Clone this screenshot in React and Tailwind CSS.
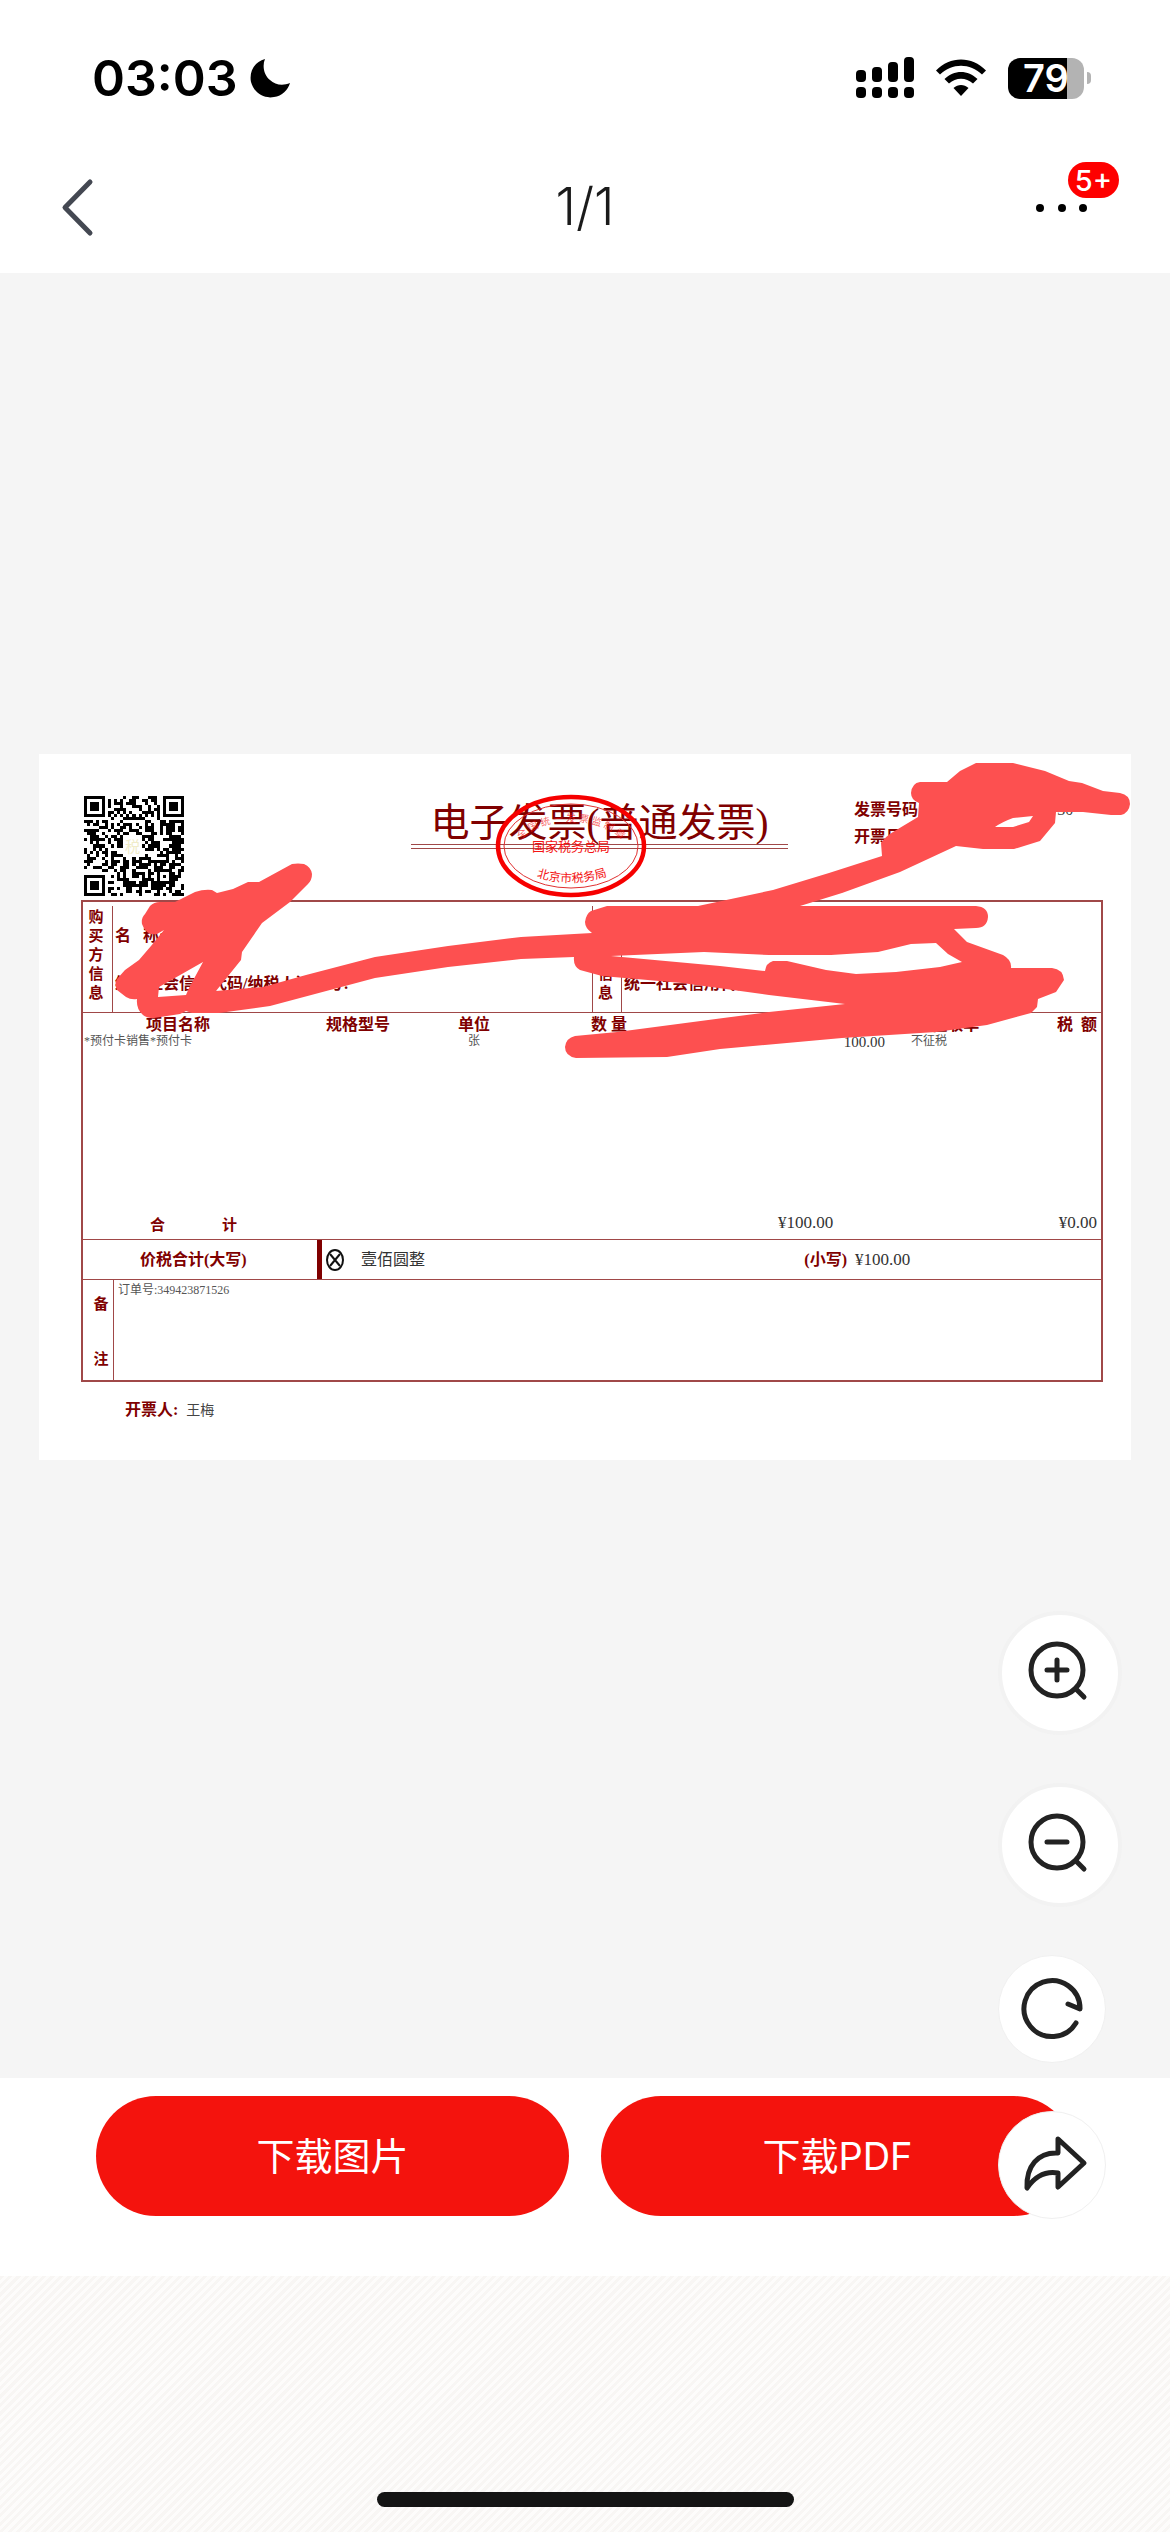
import { useMemo } from "react";

const QR_SIZE = 33

// 7x7 corner markers of the code
const finderModule = (x, y) => {
  const corners = [[0, 0], [QR_SIZE - 7, 0], [0, QR_SIZE - 7]]
  for (const [cx, cy] of corners) {
    const dx = x - cx
    const dy = y - cy
    if (dx >= -1 && dx <= 7 && dy >= -1 && dy <= 7) {
      const ring = Math.max(Math.abs(dx - 3), Math.abs(dy - 3))
      return ring === 3 || ring <= 1
    }
  }
  return null
}

const qrModules = () => {
  const cells = []
  let seed = 20417
  for (let y = 0; y < QR_SIZE; y++) {
    for (let x = 0; x < QR_SIZE; x++) {
      seed = (seed * 1103515245 + 12345) % 2147483648
      let on = (seed >> 16) % 100 < 52
      const finder = finderModule(x, y)
      const align = Math.max(Math.abs(x - 26), Math.abs(y - 26))
      if (finder !== null) on = finder
      else if (align <= 2) on = align !== 1
      else if (x === 6 || y === 6) on = (x + y) % 2 === 0
      else if (x > 12 && x < 19 && y > 12 && y < 20) on = false
      if (on) cells.push([x, y])
    }
  }
  return cells
}

const App = () => {
  return (
    <div className="flex min-h-screen flex-col bg-white font-['Inter','Noto_Sans_CJK_SC',sans-serif] text-black">
      <StatusBar />
      <TopBar />
      <div className="relative flex flex-col">
        <main className="bg-[#f5f5f5] px-[39px] pt-[481px] pb-[618px]">
          <Invoice />
        </main>
        <footer className="flex gap-8 bg-white px-24 pt-[18px] pb-[60px]">
          <DownloadButton label="下载图片" />
          <DownloadButton label="下载PDF" />
        </footer>
        <FloatingActions />
      </div>
      <div className="flex grow items-end justify-center bg-[repeating-linear-gradient(135deg,#f8f6f4_0px,#f8f6f4_3px,#fdfcfb_3px,#fdfcfb_6px)] pb-[25px]">
        <div className="h-[15px] w-[417px] rounded-full bg-[#141414]"></div>
      </div>
    </div>
  )
}

const StatusBar = () => {
  return (
    <div className="flex h-[156px] items-center justify-between pr-[79px] pl-[92px]">
      <div className="flex items-center gap-3">
        <span className="text-[50px] leading-none font-semibold">03:03</span>
        <svg className="h-10 w-10" viewBox="0 0 40 40">
          <path d="M15 1C4 4-1 14 1 24c3 11 13 17 23 15 8-1 14-7 16-14-7 3-15 2-20-3C14 17 12 8 15 1z" />
        </svg>
      </div>
      <div className="flex items-center">
        <svg className="mr-[21px] h-[42px] w-[60px]" viewBox="0 0 60 42">
          <rect x="1" y="13" width="10" height="12" rx="4" />
          <rect x="17" y="10" width="10" height="15" rx="4" />
          <rect x="33" y="5" width="10" height="20" rx="4" />
          <rect x="49" y="0" width="10" height="25" rx="4" />
          <rect x="1" y="30" width="10" height="11" rx="4" />
          <rect x="17" y="30" width="10" height="11" rx="4" />
          <rect x="33" y="30" width="10" height="11" rx="4" />
          <rect x="49" y="30" width="10" height="11" rx="4" />
        </svg>
        <svg className="mr-[22px] h-[38px] w-[50px]" viewBox="0 0 50 38">
          <path d="M0 11.500C14-3.300 36-3.300 50 11.500L46 15.500C34 3.800 16 3.800 4 15.500z" />
          <path d="M8.500 20C18 10.500 32 10.500 41.500 20L37 24.500C30 18 20 18 13 24.500z" />
          <path d="M17.500 29C22 25 28 25 32.500 29L25 37z" />
        </svg>
        <div className="flex h-[41px] w-[76px] items-center justify-center rounded-xl bg-[linear-gradient(90deg,#000_78%,#b3b3b3_78%)]">
          <span className="text-[38px] leading-none font-semibold text-white">79</span>
        </div>
        <div className="ml-[3px] h-3 w-1 rounded-r-full bg-[#b3b3b3]"></div>
      </div>
    </div>
  )
}

const TopBar = () => {
  return (
    <header className="grid h-[117px] grid-cols-3 items-start px-[51px] pt-2">
      <button aria-label="返回" className="justify-self-start">
        <svg className="h-[86px] w-[54px]" viewBox="0 0 54 86" fill="none" stroke="#444852" strokeWidth="5" strokeLinecap="round" strokeLinejoin="round">
          <path d="M39 18L14 43.500L39 69" />
        </svg>
      </button>
      <h1 className="justify-self-center text-[52px] leading-[86px] font-light text-[#1a1a1a]">1/1</h1>
      <button aria-label="更多" className="relative h-[86px] w-[90px] justify-self-end">
        <svg className="h-full w-full" viewBox="0 0 90 86">
          <circle cx="11" cy="44" r="4" />
          <circle cx="33" cy="44" r="4" />
          <circle cx="54" cy="44" r="4" />
        </svg>
        <span className="absolute top-[-2px] right-0 flex h-9 w-[51px] items-center justify-center rounded-full bg-[#fe0000] text-[29px] leading-none font-medium text-white">5+</span>
      </button>
    </header>
  )
}

const Invoice = () => {
  return (
    <section className="relative flex h-[706px] flex-col bg-white pt-[42px] pr-[28px] pl-[42px] font-['Liberation_Serif','Noto_Sans_CJK_SC',serif] text-[#800000]">
      <div className="flex h-[104px] items-start justify-between pl-[3px]">
        <QrCode />
        <div className="ml-[161px] w-[377px] pt-[5px]">
          <h2 className="border-b border-[#a04848] text-center text-[39px] leading-[43px] whitespace-nowrap">电子发票(普通发票)</h2>
          <div className="mt-[3px] border-b border-[#a04848]"></div>
        </div>
        <div className="w-[249px] text-base leading-[27px] font-bold">
          <p className="flex">发票号码:<span className="ml-[134px] font-normal text-[#444]">30</span></p>
          <p>开票日期:</p>
        </div>
      </div>

      <div className="border-2 border-[#a04848]">
        <div className="flex h-[111px] border-b border-[#a04848]">
          <Party label="购买方信息" />
          <Party label="销售方信息" divided />
        </div>
        <Items />
        <div className="flex h-[41px] items-center border-y border-[#a04848] text-base">
          <span className="w-[234px] pl-[57px] font-bold">价税合计(大写)</span>
          <span className="h-full w-[5px] bg-[#800000]"></span>
          <svg className="ml-[3px] h-6 w-5" viewBox="0 0 20 24" fill="none" stroke="#111" strokeWidth="2">
            <ellipse cx="10" cy="12" rx="8" ry="10" />
            <path d="M5 6l10 12M15 6L5 18" />
          </svg>
          <span className="ml-[16px] grow text-[#333]">壹佰圆整</span>
          <span className="font-bold">(小写)</span>
          <span className="ml-2 w-[246px] text-[17px] text-[#333]">¥100.00</span>
        </div>
        <div className="flex h-[100px]">
          <div className="flex w-[31px] flex-col items-center justify-between border-r border-[#a04848] pt-[13px] pb-[10px] pl-[6px] text-[15px] font-bold">
            <span>备</span>
            <span>注</span>
          </div>
          <p className="pt-[2px] pl-1 text-xs text-[#555]">订单号:349423871526</p>
        </div>
      </div>

      <p className="mt-4 pl-[44px] text-base leading-6 font-bold">
        开票人: <span className="ml-1 text-sm font-normal text-[#444]">王梅</span>
      </p>

      <Seal />
      <Redaction />
    </section>
  )
}

const QrCode = () => {
  const cells = useMemo(qrModules, [])

  return (
    <svg className="h-[100px] w-[100px] shrink-0" viewBox="0 0 33 33" shapeRendering="crispEdges">
      {cells.map(([x, y]) => (
        <rect key={`${x}-${y}`} x={x} y={y} width="1" height="1" />
      ))}
      <text x="16" y="18.500" fontSize="5" textAnchor="middle" fill="#f0ecc8">税</text>
    </svg>
  )
}

const Party = ({ label, divided }) => {
  return (
    <div className="flex flex-1 pt-1">
      <div className={`flex w-[30px] flex-col items-center border-r border-[#a04848] pt-[2px] pr-[3px] text-[15px] leading-[19px] font-bold ${divided ? "border-l" : ""}`}>
        {label.split("").map((char) => (
          <span key={char}>{char}</span>
        ))}
      </div>
      <div className="flex flex-col gap-6 pt-[18px] pl-[2px] text-base leading-6 font-bold whitespace-nowrap">
        <p>名&ensp; 称:</p>
        <p>统一社会信用代码/纳税人识别号:</p>
      </div>
    </div>
  )
}

const Items = () => {
  return (
    <table className="w-full table-fixed text-base">
      <colgroup>
        <col className="w-[190px]" />
        <col className="w-[170px]" />
        <col className="w-[62px]" />
        <col className="w-[208px]" />
        <col className="w-[77px]" />
        <col className="w-[98px]" />
        <col className="w-[98px]" />
        <col />
      </colgroup>
      <thead>
        <tr className="h-[23px] leading-[22px] whitespace-nowrap">
          <th>项目名称</th>
          <th>规格型号</th>
          <th>单位</th>
          <th>数 量</th>
          <th>单价</th>
          <th>金额</th>
          <th>税率/征收率</th>
          <th className="pr-1 text-right">税&ensp;额</th>
        </tr>
      </thead>
      <tbody>
        <tr className="h-[177px] align-top text-xs leading-[10px] whitespace-nowrap text-[#555]">
          <td className="pl-px">*预付卡销售*预付卡</td>
          <td></td>
          <td className="text-center">张</td>
          <td></td>
          <td></td>
          <td className="pr-[3px] text-right text-[15px] leading-3 text-[#333]">100.00</td>
          <td className="pl-[23px]">不征税</td>
          <td></td>
        </tr>
      </tbody>
      <tfoot>
        <tr className="h-[26px] align-top leading-6">
          <td colSpan="4" className="pl-[67px] text-[15px] font-bold">
            <span className="mr-[57px]">合</span>
            <span>计</span>
          </td>
          <td colSpan="2" className="pl-[65px] text-[17px] leading-5 text-[#333]">¥100.00</td>
          <td colSpan="2" className="pr-1 text-right text-[17px] leading-5 text-[#333]">¥0.00</td>
        </tr>
      </tfoot>
    </table>
  )
}

const Seal = () => {
  return (
    <svg className="absolute top-[40px] left-[456px] h-[104px] w-[152px]" viewBox="0 0 152 104" fill="none">
      <ellipse cx="76" cy="52" rx="73" ry="49" stroke="#f60000" strokeWidth="4.500" />
      <ellipse cx="76" cy="52" rx="67" ry="42" stroke="#e03030" strokeWidth="1" />
      <path id="seal-top" d="M20 56A57 35 0 0 1 132 56" />
      <path id="seal-bottom" d="M36 81Q76 96 118 80" />
      <g fill="#f41414" textAnchor="middle">
        <text fontSize="10" fillOpacity="0.7">
          <textPath href="#seal-top" startOffset="50%">全 国 统 一 发 票 监 制 章</textPath>
        </text>
        <text x="76" y="57" fontSize="13">国家税务总局</text>
        <text fontSize="12">
          <textPath href="#seal-bottom" startOffset="50%">北京市税务局</textPath>
        </text>
      </g>
    </svg>
  )
}

// marker strokes that hide the private fields
const Redaction = () => {
  return (
    <svg className="pointer-events-none absolute inset-0 h-full w-full" viewBox="39 754 1092 706" preserveAspectRatio="none">
      <path
        fill="#fd5050"
        fillRule="evenodd"
        d="M142 924Q141 918 145 914L150 906Q154 902 160 902L175 902L195 892Q204 889 212 890L217 893L233 889L248 882L259 882L292 864Q298 863 304 864Q311 867 312 874Q312 880 308 884L290 902L262 923L242 952L241 960L216 991L263 987L306 975L375 957L448 946L521 937L592 933
        Q585 928 585 922Q586 914 591 911L607 906L698 906L773 890L829 873L882 856L881 843Q886 836 893 832L918 817L919 803Q911 800 911 793Q912 783 920 782L947 782L960 771L976 763L1013 763L1045 771L1069 781L1082 783L1103 791L1120 793Q1130 795 1130 804Q1129 813 1121 815L1111 815L1083 812L1056 812L1055 823L1040 841L1014 849L983 849L956 846L900 872L842 893L800 906L976 906Q988 907 988 917Q987 928 976 928L954 929L967 942L1003 955Q1012 960 1011 968L1052 968Q1063 969 1064 980L1056 992L1038 999L1037 1007L1031 1013L987 1025L936 1032L842 1038L720 1049L667 1057L576 1058Q565 1056 565 1047Q566 1038 575 1036L617 1032L769 1012L845 1004L769 995L682 983L602 976L580 970Q573 966 574 957
        L521 959L448 967L375 978L270 1006L219 1013L192 1013L186 1011L180 1014L154 1018Q146 1018 143 1015Q136 1009 137 999Q131 1000 126 997L117 990Q114 984 117 979L125 970L139 960L151 946L164 930L157 934Q146 936 142 924z
        M203 962L159 987L158 997L186 995L189 988z
        M611 956L704 952L769 955L831 955L878 952L911 944L936 943L948 954L962 962L940 967L896 972L856 974L826 970L787 961L773 961Q766 963 765 971L720 966z
        M995 827Q1002 822 1013 818L1033 816L1029 822L1013 827z"
      />
    </svg>
  )
}

const DownloadButton = ({ label }) => {
  return (
    <button className="h-[120px] flex-1 rounded-full bg-[#f4130d] text-[38px] text-white">{label}</button>
  )
}

const FloatingActions = () => {
  return (
    <div className="absolute right-12 bottom-[57px] flex flex-col items-start gap-12">
      <RoundButton name="放大" large>
        <circle cx="59" cy="59" r="26" />
        <path d="M78 78l8 8M49 59h20M59 49v20" />
      </RoundButton>
      <RoundButton name="缩小" large>
        <circle cx="59" cy="59" r="26" />
        <path d="M78 78l8 8M49 59h20" />
      </RoundButton>
      <RoundButton name="刷新">
        <path d="M78 68A28 28 0 1 1 82 54L70 49" />
      </RoundButton>
      <RoundButton name="分享">
        <path d="M60 28L86 52L60 76V62C48 60 38 64 29 77C28 55 40 41 60 42z" />
      </RoundButton>
    </div>
  )
}

const RoundButton = ({ name, large, children }) => {
  return (
    <button aria-label={name} className={`rounded-full bg-white ${large ? "h-[124px] w-[124px] border-4 border-[#f2f2f2]" : "h-[108px] w-[108px] border border-[#f0f0f0]"}`}>
      <svg className="h-full w-full" viewBox={large ? "4 4 116 116" : "1 1 106 106"} fill="none" stroke="#222" strokeWidth="5" strokeLinecap="round" strokeLinejoin="round">
        {children}
      </svg>
    </button>
  )
}

export default App
